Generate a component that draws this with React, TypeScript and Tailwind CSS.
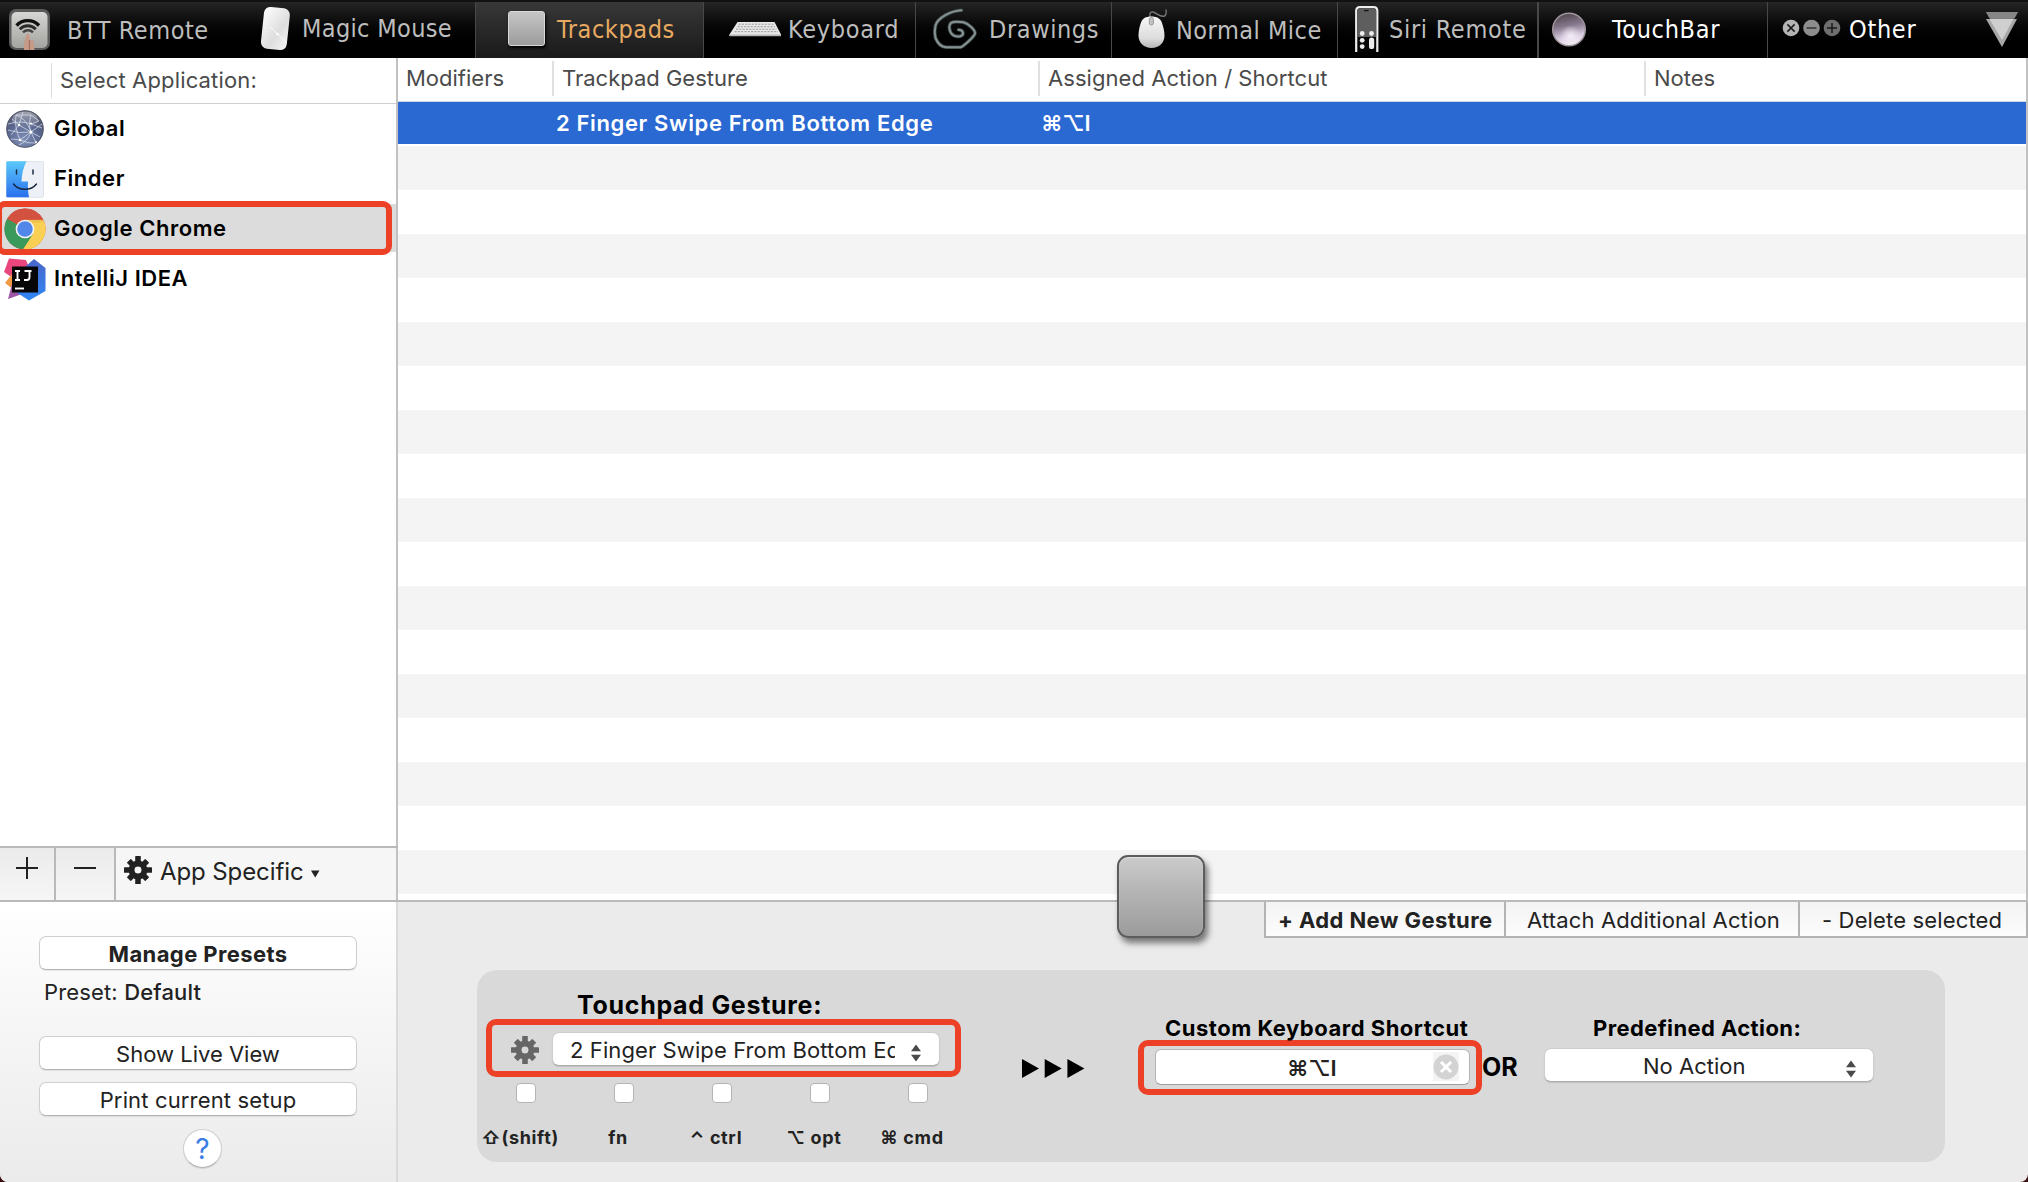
import React from "react";

function RemoteIcon() {
  return (
    <svg width="42" height="43" viewBox="0 0 42 43">
      <defs>
        <linearGradient id="rm" x1="0" y1="0" x2="0" y2="1">
          <stop offset="0" stopColor="#d6d6d4" />
          <stop offset="1" stopColor="#a3a3a0" />
        </linearGradient>
      </defs>
      <rect x="0" y="0" width="41" height="41" rx="7" fill="#5a5a5a" />
      <rect x="2.500" y="3" width="36" height="36" rx="5" fill="url(#rm)" />
      <g fill="none" stroke="#111" strokeLinecap="butt">
        <path d="M7.500 16.500a15.500 15.500 0 0 1 22.500 0" strokeWidth="3.400" />
        <path d="M10.800 20.200a11 11 0 0 1 16 0" strokeWidth="2.800" stroke="#2a2a2a" />
        <path d="M14 23.300a7 7 0 0 1 10 0" strokeWidth="2.400" stroke="#444" />
      </g>
      <path d="M15 41V35l2.200-9c.5-1.800 3-1.800 3.300 0l.5 6c.6-1.500 3.600-1.200 3.800.6L25.500 41z" fill="#c79a88" />
      <path d="M20.400 31v10" stroke="#8a5e50" strokeWidth=".8" />
    </svg>
  );
}

function MagicMouseIcon() {
  return (
    <svg width="34" height="46" viewBox="0 0 34 46">
      <defs>
        <linearGradient id="mm" x1="0" y1="0" x2="1" y2="1">
          <stop offset="0" stopColor="#fff" />
          <stop offset=".6" stopColor="#dededf" />
          <stop offset="1" stopColor="#f5f5f5" />
        </linearGradient>
      </defs>
      <rect x="2.400" y="1.500" width="26" height="42" rx="6.500" fill="url(#mm)" transform="rotate(6 15.500 22.500)" />
      <path d="M10 21l15 14" stroke="#fff" strokeWidth="1" opacity=".7" />
      <circle cx="17.500" cy="28" r="1.300" fill="#fff" />
    </svg>
  );
}

function TrackpadIcon() {
  return <div className="h-[35px] w-[37px] rounded-[3px] border border-[#d9d9d9] bg-linear-to-b from-[#c6c6c6] to-[#9c9c9c] shadow-[1px_2px_3px_#000]" />;
}

function KeyboardIcon() {
  return (
    <svg width="53" height="16" viewBox="0 0 53 16">
      <path d="M8.500 1h37L52 13.500v1.500H.5v-1.500z" fill="#e9e9e9" />
      <path d="M.5 13.600h51.500V15.200H.5z" fill="#b5b5b5" />
      <g stroke="#8f8f8f" strokeWidth=".9" strokeDasharray="2.200 1.100">
        <path d="M9.500 3.200h35" />
        <path d="M8.500 5.700h37.500" />
        <path d="M7 8.200h40.500" />
        <path d="M5.500 10.700h43.500" />
      </g>
    </svg>
  );
}

const spiral =
  "M28.500 2.200C18 2.500 4.500 10 2.500 17.500C1.500 22 1.500 26 2.500 30C5 36 9 39 13 39.300H27.500C30 38.800 41 29 42 25.500C42.500 22 35 15.500 30.500 14.300C26 13.600 20 13.800 18 14.800C16 17 16.200 21 17.500 24C19.500 28 24 28.800 27.500 28.200C31.500 26.500 30.500 22 25.500 21.800";

function SpiralIcon() {
  return (
    <svg width="44" height="42" viewBox="0 0 44 42" fill="none" strokeLinecap="round" strokeLinejoin="round">
      <path d={spiral} stroke="#3b4748" strokeWidth="3.600" />
      <path d={spiral} stroke="#869192" strokeWidth="2" />
    </svg>
  );
}

function MouseIcon() {
  return (
    <svg width="30" height="40" viewBox="0 0 30 40">
      <defs>
        <linearGradient id="ms" x1="0" y1="0" x2="0" y2="1">
          <stop offset="0" stopColor="#f7f7f7" />
          <stop offset=".7" stopColor="#dcdcdc" />
          <stop offset="1" stopColor="#b5b5b5" />
        </linearGradient>
      </defs>
      <path d="M12.500 9C11 5 12 2.500 15 3C19 4 22 8.500 26.500 7C28.500 6 28.500 4 28 .5" fill="none" stroke="#777" strokeWidth="1.400" />
      <path d="M13.200 7.500C19 7.500 22.500 9.500 24 14C25.300 18 26.500 22 26.500 26.500C26.500 34 21 39 13.500 39S.5 34 .5 26.500C.5 22 1.500 18 2.800 14C4.300 9.500 7.500 7.500 13.200 7.500z" fill="url(#ms)" />
      <rect x="11.300" y="8.500" width="4.200" height="7.500" rx="2" fill="#c2c2c2" stroke="#8d8d8d" strokeWidth=".8" />
    </svg>
  );
}

function SiriRemoteIcon() {
  return (
    <svg width="24" height="47" viewBox="0 0 24 47">
      <path d="M1.200 46V5Q1.200 1.200 5 1.200H18.500Q22.300 1.200 22.300 5V46" fill="#050505" stroke="#ededed" strokeWidth="2.200" />
      <path d="M2.300 31V5Q2.300 2.300 5 2.300H18.500Q21.200 2.300 21.200 5V31z" fill="#5e5e5e" />
      <rect x="9" y="4" width="4.500" height="1.200" fill="#111" />
      <g fill="#ececec">
        <circle cx="7.200" cy="27.500" r="2.400" />
        <circle cx="16.500" cy="27.500" r="2.400" />
        <circle cx="7.200" cy="34.300" r="2.400" />
        <circle cx="7.200" cy="40.600" r="2.400" />
        <rect x="14" y="31.500" width="5.200" height="11.500" rx="2.600" />
      </g>
    </svg>
  );
}

function OrbIcon() {
  return (
    <svg width="36" height="36" viewBox="0 0 36 36">
      <defs>
        <linearGradient id="ob" x1="0" y1="0" x2="0.200" y2="1">
          <stop offset="0" stopColor="#453c43" />
          <stop offset=".45" stopColor="#85788c" />
          <stop offset=".8" stopColor="#d8cce0" />
          <stop offset="1" stopColor="#efe6ee" />
        </linearGradient>
        <radialGradient id="og" cx=".55" cy=".72" r=".35">
          <stop offset="0" stopColor="#f3edf8" />
          <stop offset="1" stopColor="#f3edf8" stopOpacity="0" />
        </radialGradient>
      </defs>
      <circle cx="18" cy="17.500" r="16.300" fill="url(#ob)" stroke="#9d959b" strokeWidth="1.500" />
      <circle cx="18" cy="17.500" r="15.500" fill="url(#og)" />
    </svg>
  );
}

function OtherIcon() {
  return (
    <svg width="60" height="18" viewBox="0 0 60 18" fill="none" strokeWidth="1.500">
      <circle cx="9" cy="9" r="8.300" fill="#b4b4b4" />
      <path d="M5.400 5.400l7.200 7.200M12.600 5.400l-7.200 7.200" stroke="#1a1a1a" />
      <circle cx="29.500" cy="9" r="8.300" fill="#8d8d8d" />
      <path d="M24.500 9h10" stroke="#333" />
      <circle cx="50" cy="9" r="8.300" fill="#6e6e6e" />
      <path d="M45 9h10M50 4v10" stroke="#1a1a1a" />
    </svg>
  );
}

type Tab = { label: string; box: string; icon: React.ReactNode; iconBox: string; text: string };

const tabs: Tab[] = [
  { label: "BTT Remote", box: "w-[260px] pl-[9px]", icon: <RemoteIcon />, iconBox: "mt-[7px] w-[58px]", text: "mt-[14px] tracking-[0.55px] text-[#bdbdbd]" },
  { label: "Magic Mouse", box: "w-[215px]", icon: <MagicMouseIcon />, iconBox: "mt-[4px] w-[42px]", text: "mt-[12px] tracking-[0.35px] text-[#bdbdbd]" },
  { label: "Trackpads", box: "w-[228px] border-l border-[#484848] bg-linear-to-b from-[#383838] to-[#1a1a1a] pl-[32px]", icon: <TrackpadIcon />, iconBox: "mt-[9px] w-[49px]", text: "mt-[13px] tracking-[0.6px] text-[#e8aa60]" },
  { label: "Keyboard", box: "w-[212px] border-l border-[#484848] pl-[25px]", icon: <KeyboardIcon />, iconBox: "mt-[19px] w-[59px]", text: "mt-[13px] tracking-[0.7px] text-[#bdbdbd]" },
  { label: "Drawings", box: "w-[196px] border-l border-[#484848] pl-[17px]", icon: <SpiralIcon />, iconBox: "mt-[6px] w-[56px]", text: "mt-[13px] tracking-[0.6px] text-[#bdbdbd]" },
  { label: "Normal Mice", box: "w-[226px] border-l border-[#484848] pl-[26px]", icon: <MouseIcon />, iconBox: "mt-[7px] w-[38px]", text: "mt-[14px] tracking-[0.5px] text-[#bdbdbd]" },
  { label: "Siri Remote", box: "w-[200px] border-l border-[#484848] pl-[17px]", icon: <SiriRemoteIcon />, iconBox: "mt-[4px] w-[34px]", text: "mt-[13px] tracking-[0.7px] text-[#bdbdbd]" },
  { label: "TouchBar", box: "w-[230px] border-l-2 border-[#484848] pl-[12px]", icon: <OrbIcon />, iconBox: "mt-[10px] w-[61px]", text: "mt-[13px] tracking-[0.7px] text-white" },
  { label: "Other", box: "w-[218px] border-l border-[#484848] pl-[14px]", icon: <OtherIcon />, iconBox: "mt-[17px] w-[67px]", text: "mt-[13px] tracking-[0.7px] text-white" },
];

function TabBar() {
  return (
    <header className="flex h-[58px] shrink-0 border-t-2 border-[#111] bg-linear-to-b from-[#252525] to-black to-85%">
      {tabs.map((t) => (
        <div key={t.label} className={`flex shrink-0 items-start ${t.box}`}>
          <div className={`shrink-0 ${t.iconBox}`}>{t.icon}</div>
          <span className={`font-['DejaVu_Sans_Condensed','DejaVu_Sans',sans-serif] text-[25px] leading-[30px] whitespace-nowrap [font-stretch:condensed] ${t.text}`}>{t.label}</span>
        </div>
      ))}
      <svg className="mt-[10px]" width="34" height="36" viewBox="0 0 34 36">
        <path d="M1 0h32L17 24z" fill="#7a7a7a" />
        <path d="M1 7h31L17 35z" fill="#a8a8a8" />
        <path d="M4.500 7h24L17 28z" fill="#cfcfcf" />
        <path d="M1 0h32l-3.500 6.500h-25z" fill="#868686" />
      </svg>
    </header>
  );
}

function GlobeIcon() {
  return (
    <svg width="38" height="38" viewBox="0 0 38 38">
      <defs>
        <radialGradient id="gl" cx=".45" cy=".8" r=".8">
          <stop offset="0" stopColor="#7f8fb6" />
          <stop offset=".6" stopColor="#59658c" />
          <stop offset="1" stopColor="#54586a" />
        </radialGradient>
        <linearGradient id="gh" x1="0" y1="0" x2="0" y2="1">
          <stop offset="0" stopColor="#fff" stopOpacity=".45" />
          <stop offset="1" stopColor="#fff" stopOpacity="0" />
        </linearGradient>
      </defs>
      <circle cx="19" cy="19" r="18.300" fill="url(#gl)" stroke="#4c5168" />
      <ellipse cx="19" cy="10" rx="13" ry="8.500" fill="url(#gh)" />
      <g fill="none" stroke="#dfe5f3" strokeWidth=".7">
        <path d="M10 5Q8 17 14 30M10 5Q20 8 25 22L34 27M25 5Q22 15 25 22Q22 31 13 35M2 14Q15 10 25 14L36 18M14 30L25 22L30 33M14 30Q22 34 30 33M10 5L25 5L33 11M5 29L14 30M25 14L33 11M2 20Q13 24 25 22M17 2L13 15L25 22L36 14M6 9L13 15L5 25" />
      </g>
      <g fill="#fff">
        <circle cx="25" cy="22" r="1.500" />
        <circle cx="13" cy="15" r="1.300" />
        <circle cx="14" cy="30" r="1.300" />
        <circle cx="25" cy="13.500" r="1.100" />
        <circle cx="30" cy="32" r="1" />
      </g>
    </svg>
  );
}

function FinderIcon() {
  return (
    <svg width="38" height="37" viewBox="0 0 38 37">
      <defs>
        <linearGradient id="fd" x1="0" y1="0" x2="0" y2="1">
          <stop offset="0" stopColor="#5ac8fa" />
          <stop offset="1" stopColor="#2a70ee" />
        </linearGradient>
      </defs>
      <rect x=".3" y=".3" width="37.200" height="36" rx="1.500" fill="#edf1f7" stroke="#ccd3dc" strokeWidth=".6" />
      <path d="M1.500.3H20.500C17.500 6 15.700 13.500 15.500 20.500H22C21.800 26 22 31 23 36.300H1.500Q.3 36.300.3 35V1.500Q.3.300 1.500.300z" fill="url(#fd)" />
      <path d="M10.500 9v4M27 9v4" stroke="#1c2c44" strokeWidth="1.500" strokeLinecap="round" />
      <path d="M7.500 23C13 30 25 30 30.500 23" fill="none" stroke="#16243a" strokeWidth="1.400" strokeLinecap="round" />
    </svg>
  );
}

function ChromeIcon() {
  return (
    <svg width="42" height="42" viewBox="0 0 48 48">
      <circle cx="24" cy="24" r="23.500" fill="#d2513f" />
      <path d="M24 24L3.650 12.250A23.500 23.500 0 0 0 21.700 47.400L33.600 30.500z" fill="#3a9a5b" />
      <path d="M24 13.300H44.900A23.500 23.500 0 0 1 21.700 47.400L33.300 29.300z" fill="#fad054" />
      <path d="M3.650 12.250A23.500 23.500 0 0 1 44.900 13.300H24L14.700 29.500z" fill="#d2513f" />
      <path d="M3.650 12.250L14.700 29.400L24 24z" fill="#3a9a5b" />
      <path d="M24 13.300H44.900l.7 2.200L32 17.500z" fill="#d9a33b" opacity=".35" />
      <circle cx="24" cy="24" r="10.700" fill="#f5f5f5" />
      <circle cx="24" cy="24" r="8.900" fill="#5287ea" />
    </svg>
  );
}

function IntelliJIcon() {
  return (
    <svg width="42" height="43" viewBox="0 0 42 43">
      <defs>
        <linearGradient id="ib" x1="0" y1="0" x2="0" y2="1">
          <stop offset="0" stopColor="#4a66c8" />
          <stop offset="1" stopColor="#2f86f5" />
        </linearGradient>
      </defs>
      <path d="M5 .5L22 2L26 12L12 22L0 14z" fill="#e8467c" />
      <path d="M8 16L1 25L10 32L14 24z" fill="#f29a43" />
      <path d="M8 26L4 41L18 36L20 28z" fill="#9a55a3" />
      <path d="M30 1L41.500 10V33L25 42.500L12 34L22 8z" fill="url(#ib)" />
      <rect x="8" y="8.500" width="26" height="26" fill="#060606" />
      <g fill="none" stroke="#fff" strokeWidth="1.900">
        <path d="M11 13h5M11 22h5M13.500 13v9" />
        <path d="M20.500 13h7M25.500 13v6q0 3-2.500 3h-3" />
        <path d="M11 30.500h9" />
      </g>
    </svg>
  );
}

const apps = [
  { name: "Global", icon: <GlobeIcon />, iconBox: "w-[48px]", pad: "pl-[6px]", bg: "", mt: "mt-[6px]" },
  { name: "Finder", icon: <FinderIcon />, iconBox: "w-[48px]", pad: "pl-[6px]", bg: "", mt: "mt-[7px]" },
  { name: "Google Chrome", icon: <ChromeIcon />, iconBox: "w-[50px]", pad: "pl-[4px]", bg: "bg-[#dcdcdc]", mt: "mt-[4px]" },
  { name: "IntelliJ IDEA", icon: <IntelliJIcon />, iconBox: "w-[50px]", pad: "pl-[4px]", bg: "", mt: "mt-[4px]" },
];

function Gear({ color }: { color: string }) {
  return (
    <svg width="28" height="28" viewBox="-14 -14 28 28" fill={color}>
      {[0, 45, 90, 135].map((a) => (
        <rect key={a} x="-2.800" y={a % 90 ? -13 : -14} width="5.600" height={a % 90 ? 26 : 28} rx=".6" transform={`rotate(${a})`} mask="url(#gearHole)" />
      ))}
      <mask id="gearHole">
        <rect x="-16" y="-16" width="32" height="32" fill="#fff" />
        <circle r="3.800" fill="#000" />
      </mask>
      <circle r="6.600" fill="none" stroke={color} strokeWidth="5.600" />
    </svg>
  );
}

function PushButton({ children, className }: { children: React.ReactNode; className: string }) {
  return (
    <button className={`ml-[39px] block h-[34px] w-[318px] rounded-[7px] border border-[#cfcfcf] border-b-[#b3b3b3] bg-white pt-px text-center text-[22px] leading-[30px] text-[#222] shadow-[0_1px_1px_rgba(0,0,0,0.08)] ${className}`}>
      {children}
    </button>
  );
}

function Sidebar() {
  return (
    <aside className="flex w-[398px] shrink-0 flex-col">
      <div className="flex h-[788px] flex-col border-r-2 border-[#c2c2c2] bg-white">
        <div className="flex h-[46px] border-b border-[#cfcfcf]">
          <div className="mt-[5px] h-[35px] w-[52px] border-r border-[#dcdcdc]" />
          <span className="mt-[10px] pl-[8px] text-[22px] leading-[24px] tracking-[0.15px] text-[#4a4a4a]">Select Application:</span>
        </div>
        <div className="relative">
          {apps.map((a) => (
            <div key={a.name} className="h-[50px]">
              <div className={`flex h-[48px] items-start ${a.pad} ${a.bg}`}>
                <div className={`${a.mt} ${a.iconBox} shrink-0`}>{a.icon}</div>
                <span className="mt-[12px] text-[22px] leading-[24px] font-semibold tracking-[0.55px] text-black">{a.name}</span>
              </div>
            </div>
          ))}
          <div className="absolute top-[97px] left-[-4px] h-[54px] w-[396px] rounded-[9px] border-6 border-[#ec4127]" />
        </div>
      </div>
      <div className="flex h-[56px] border-y-2 border-[#b9b9b9]">
        <div className="flex w-[56px] border-r-2 border-[#b9b9b9] bg-linear-to-b from-[#ebebeb] to-[#f6f6f6] pt-[9px] pl-[16px]">
          <svg width="22" height="22" viewBox="0 0 22 22" stroke="#222" strokeWidth="2"><path d="M0 11h22M11 0v22" /></svg>
        </div>
        <div className="flex w-[60px] border-r-2 border-[#b9b9b9] bg-linear-to-b from-[#ebebeb] to-[#f6f6f6] pt-[9px] pl-[18px]">
          <svg width="22" height="22" viewBox="0 0 22 22" stroke="#222" strokeWidth="2"><path d="M0 11h22" /></svg>
        </div>
        <div className="flex flex-1 items-start border-r-2 border-[#c2c2c2] bg-[#f6f6f6] pt-[8px] pl-[8px]">
          <Gear color="#222" />
          <span className="mt-[3px] ml-[8px] text-[24px] leading-[26px] tracking-[-0.1px] text-[#222]">App Specific</span>
          <svg className="mt-[14px] ml-[7px]" width="9" height="8" viewBox="0 0 9 8"><path d="M0 .5h8.500L4.200 7.500z" fill="#222" /></svg>
        </div>
      </div>
      <div className="flex flex-1 flex-col border-r-2 border-[#dadada] bg-linear-to-b from-white to-[#ebebeb] pt-[34px]">
        <PushButton className="font-bold tracking-[0.4px]">Manage Presets</PushButton>
        <div className="mt-[10px] ml-[44px] text-[22px] leading-[24px] tracking-[0.15px] text-[#222]">
          Preset: <span className="font-medium">Default</span>
        </div>
        <PushButton className="mt-[32px]">Show Live View</PushButton>
        <PushButton className="mt-[12px] tracking-[0.15px]">Print current setup</PushButton>
        <button className="mt-[13px] ml-[183px] size-[39px] rounded-full border border-[#cfcfcf] border-b-[#b3b3b3] bg-white text-[28px] leading-[38px] text-[#3c7ee4] shadow-[0_1px_1px_rgba(0,0,0,0.1)]">?</button>
      </div>
    </aside>
  );
}

function GestureTable() {
  return (
    <section className="flex h-[844px] flex-col border-r-2 border-b-2 border-r-[#c2c2c2] border-b-[#b9b9b9] bg-white">
      <div className="flex h-[44px] shrink-0 border-b border-[#cfd6e2] text-[22px] leading-[24px] text-[#4a4a4a]">
        <div className="mt-[3px] h-[35px] w-[156px] border-r-2 border-[#e0e0e0] pt-[5px] pl-[8px]">Modifiers</div>
        <div className="mt-[3px] h-[35px] w-[486px] border-r-2 border-[#e0e0e0] pt-[5px] pl-[8px]">Trackpad Gesture</div>
        <div className="mt-[3px] h-[35px] w-[606px] border-r-2 border-[#e0e0e0] pt-[5px] pl-[8px] tracking-[0.05px]">Assigned Action / Shortcut</div>
        <div className="mt-[3px] h-[35px] pt-[5px] pl-[8px]">Notes</div>
      </div>
      <div className="mb-[2px] flex h-[42px] shrink-0 bg-[#2b69d2] pt-[9px] text-[22px] leading-[24px] font-semibold text-white">
        <div className="w-[643px] pl-[158px] tracking-[0.63px]">2 Finger Swipe From Bottom Edge</div>
        <div className="tracking-[-0.3px]">⌘⌥I</div>
      </div>
      {Array.from({ length: 17 }, (_, i) => (
        <div key={i} className="h-[44px] shrink-0 odd:bg-white even:bg-[#f4f4f4] first:bg-[#f4f4f4] [&:nth-child(odd)]:bg-[#f4f4f4] [&:nth-child(even)]:bg-white" />
      ))}
    </section>
  );
}

function Arrows() {
  return (
    <svg width="12" height="18" viewBox="0 0 12 18">
      <path d="M6 .5L11 7.300H1z" fill="#4a4a4a" />
      <path d="M6 17.500L11 10.700H1z" fill="#4a4a4a" />
    </svg>
  );
}

const keys = ["⇧(shift)", "fn", "⌃ ctrl", "⌥ opt", "⌘ cmd"];

function ActionPanel() {
  return (
    <div className="mt-[32px] ml-[79px] flex h-[192px] w-[1468px] items-start rounded-[20px] bg-[#d9d9d9]">
      <div className="w-[490px] shrink-0">
        <div className="h-[49px] pt-[19px] pl-[100px] text-[25px] leading-[32px] font-bold tracking-[0.7px] text-black">Touchpad Gesture:</div>
        <div className="ml-[9px] flex h-[58px] w-[475px] items-start rounded-[10px] border-6 border-[#ec4127] pt-[7px] pl-[19px]">
          <div className="mt-[4px] mr-[13px]"><Gear color="#666" /></div>
          <div className="flex h-[34px] w-[388px] items-start rounded-[7px] border border-[#cdcdcd] border-b-[#adadad] bg-white pl-[17px] shadow-[0_1px_1px_rgba(0,0,0,0.12)]">
            <div className="mt-[4px] w-[325px] overflow-hidden text-[22px] leading-[26px] tracking-[0.1px] whitespace-nowrap text-[#222]">2 Finger Swipe From Bottom Edge</div>
            <div className="mt-[11px] ml-[15px]"><Arrows /></div>
          </div>
        </div>
        <div className="mt-[6px] grid grid-cols-5 justify-items-center">
          {keys.map((k) => (
            <div key={k} className="size-[20px] rounded-[4px] border border-[#b4b4b4] bg-white" />
          ))}
        </div>
        <div className="mt-[23px] -ml-[6px] grid grid-cols-[98px_98px_98px_98px_98px] justify-items-center text-[18px] leading-[24px] font-bold tracking-[0.65px] whitespace-nowrap text-[#222]">
          {keys.map((k) => (
            <span key={k}>{k}</span>
          ))}
        </div>
      </div>
      <svg className="mt-[88px] ml-[55px] shrink-0" width="63" height="21" viewBox="0 0 63 21">
        <path d="M0 1l17 9.500L0 20zM22.700 1l17 9.500L22.700 20zM45.400 1l17 9.500L45.400 20z" fill="#000" />
      </svg>
      <div className="ml-[53px] w-[344px] shrink-0 pt-[46px]">
        <div className="pl-[27px] text-[22px] leading-[24px] font-bold tracking-[0.5px] whitespace-nowrap text-black">Custom Keyboard Shortcut</div>
        <div className="flex h-[55px] rounded-[10px] border-6 border-[#ec4127] pt-[3px] pl-[11px]">
          <div className="flex h-[36px] w-[315px] items-start rounded-[6px] border border-[#b5b5b5] border-b-[#9e9e9e] bg-white">
            <span className="mt-[5px] ml-[131px] w-[146px] text-[22px] leading-[26px] font-semibold tracking-[-0.3px] text-[#222]">⌘⌥I</span>
            <div className="mt-[2px] flex h-[29px] w-[26px] items-center bg-[#f4f4f4]">
              <svg width="26" height="26" viewBox="0 0 26 26">
                <circle cx="13" cy="13" r="12.500" fill="#d3d3d3" />
                <path d="M8 8l10 10M18 8L8 18" stroke="#fff" strokeWidth="3" />
              </svg>
            </div>
          </div>
        </div>
      </div>
      <div className="w-[62px] shrink-0 pt-[81px] text-[25px] leading-[32px] font-bold text-black">OR</div>
      <div className="w-[330px] shrink-0 pt-[46px]">
        <div className="pl-[49px] text-[22px] leading-[24px] font-bold tracking-[0.4px] whitespace-nowrap text-black">Predefined Action:</div>
        <div className="mt-[8px] flex h-[34px] items-start rounded-[7px] border border-[#cdcdcd] border-b-[#adadad] bg-white shadow-[0_1px_1px_rgba(0,0,0,0.12)]">
          <span className="mt-[4px] ml-[98px] w-[202px] text-[22px] leading-[26px] text-[#222]">No Action</span>
          <div className="mt-[11px]"><Arrows /></div>
        </div>
      </div>
    </div>
  );
}

export default function App() {
  return (
    <div className="bg-[#3a0d10] font-['Inter','Liberation_Sans',sans-serif]">
      <div className="flex h-[1182px] w-[2028px] flex-col overflow-hidden rounded-b-[8px] bg-[#ebebeb]">
        <TabBar />
        <div className="flex flex-1">
          <Sidebar />
          <main className="relative flex flex-1 flex-col">
            <GestureTable />
            <div className="flex h-[36px] w-[764px] items-center self-end border-x-2 border-b-2 border-[#b3b3b3] bg-linear-to-b from-[#f3f3f3] to-[#fcfcfc] text-[22px] leading-[32px] whitespace-nowrap text-[#222]">
              <div className="h-full w-[240px] border-r-2 border-[#b3b3b3] pt-[2px] pl-[12px] font-bold tracking-[0.4px]">+ Add New Gesture</div>
              <div className="h-full w-[294px] border-r-2 border-[#b3b3b3] pt-[2px] pl-[21px] tracking-[0.15px]">Attach Additional Action</div>
              <div className="h-full pt-[2px] pl-[22px] tracking-[0.15px]">- Delete selected</div>
            </div>
            <ActionPanel />
            <div className="absolute top-[797px] left-[719px] h-[83px] w-[88px] rounded-[11px] border-2 border-[#5c5c5c] bg-[linear-gradient(to_bottom,#cbcbcb,#b4b4b4_45%,#9b9b9b)] shadow-[3px_5px_6px_rgba(0,0,0,0.5),inset_0_1px_1px_#e4e4e4]" />
          </main>
        </div>
      </div>
    </div>
  );
}
